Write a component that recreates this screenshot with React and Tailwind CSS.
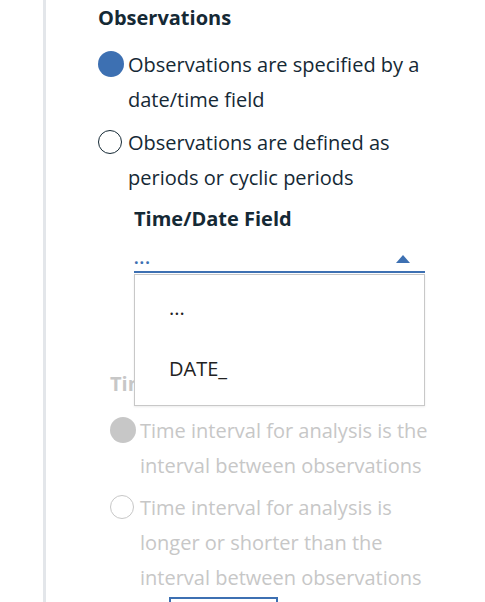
import React from 'react';

const font = { fontFamily: '"Open Sans", "Noto Sans", Arial, sans-serif' };

function Radio({ checked, disabled, children }) {
  const ring = disabled ? 'border-[#c7c7c7]' : 'border-[#152935]';
  const fill = disabled ? 'bg-[#c7c7c7]' : 'bg-[#3d70b2]';
  return (
    <label className="flex items-start gap-[4px]">
      {checked ? (
        <span className={`mt-[4px] h-[26px] w-[26px] shrink-0 rounded-full ${fill}`} />
      ) : (
        <span className={`mt-[5px] mr-[2px] h-[24px] w-[24px] shrink-0 rounded-full border-[1.5px] bg-white ${ring}`} />
      )}
      <span className={`text-[20px] leading-[35px] ${disabled ? 'text-[#c7c7c7]' : 'text-[#152935]'}`}>
        {children}
      </span>
    </label>
  );
}

export default function App() {
  return (
    <div className="flex h-[602px] w-[485px] overflow-hidden bg-white" style={font}>
      <div className="w-[43px] shrink-0" />
      <div className="relative flex-1 border-l-[3px] border-[#e3e6ea] pl-[52px] pr-[40px]">
        <h2 className="pt-[4px] text-[20px] font-bold leading-[28px] text-[#152935]">Observations</h2>

        <div className="mt-[15px] flex flex-col gap-[8px]">
          <Radio checked>Observations are specified by a date/time field</Radio>
          <Radio>Observations are defined as periods or cyclic periods</Radio>
        </div>

        {/* Time/Date field select */}
        <div className="relative ml-[36px] mt-[10px] w-[291px]">
          <div className="text-[20px] font-bold leading-[28px] text-[#152935]">Time/Date Field</div>
          <div className="mt-[12px] flex h-[28px] items-center justify-between border-b-2 border-[#3d70b2] pr-[15px]">
            <span className="text-[16px] font-bold leading-none tracking-[1px] text-[#3d70b2]">...</span>
            <svg width="14" height="9" viewBox="0 0 14 9">
              <path d="M0 9 L7 1 L14 9 Z" fill="#3d70b2" />
            </svg>
          </div>

          <div className="absolute left-0 right-0 top-[69px] z-10 border border-[#c8c8c8] bg-white shadow-[0_1px_2px_rgba(0,0,0,0.08)]">
            <div className="h-[130px] pt-[16px]">
              <div className="flex h-[34px] items-center pl-[34px] text-[20px] text-[#222]">...</div>
              <div className="mt-[27px] flex h-[34px] items-center pl-[34px] text-[20px] text-[#222]">DATE_</div>
            </div>
          </div>
        </div>

        {/* disabled section */}
        <div className="ml-[12px] mt-[97px]">
          <div className="text-[20px] font-bold leading-[28px] text-[#c7c7c7]">Time interval</div>
          <div className="mt-[15px] flex flex-col gap-[7px]">
            <Radio checked disabled>Time interval for analysis is the interval between observations</Radio>
            <Radio disabled>Time interval for analysis is longer or shorter than the interval between observations</Radio>
          </div>
          <div className="ml-[59px] mt-[2px] h-[40px] w-[109px] border-2 border-[#3d70b2]" />
        </div>
      </div>
    </div>
  );
}
